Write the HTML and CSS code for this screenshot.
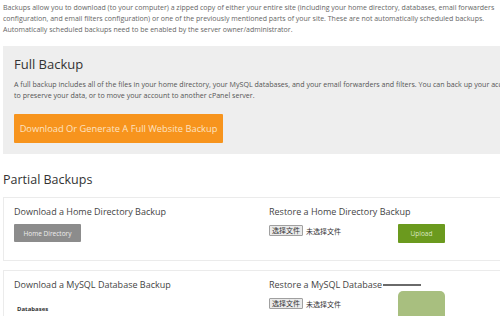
FILE: index.html
```html
<!DOCTYPE html>
<html lang="en">
<head>
    <meta charset="UTF-8">
    <title>Backups</title>
    <link rel="stylesheet" href="styles.css">
</head>
<body>
    <div class="page">
        <p class="intro">Backups allow you to download (to your computer) a zipped copy of either your entire site (including your home directory, databases, email forwarders<br>configuration, and email filters configuration) or one of the previously mentioned parts of your site. These are not automatically scheduled backups.<br>Automatically scheduled backups need to be enabled by the server owner/administrator.</p>

        <!-- Full backup -->
        <div class="full-backup">
            <h2>Full Backup</h2>
            <p>A full backup includes all of the files in your home directory, your MySQL databases, and your email forwarders and filters. You can back up your account<br>to preserve your data, or to move your account to another cPanel server.</p>
            <button class="btn btn-orange">Download Or Generate A Full Website Backup</button>
        </div>

        <h2 class="section-title">Partial Backups</h2>

        <div class="card">
            <div class="col">
                <h3>Download a Home Directory Backup</h3>
                <button class="btn btn-grey">Home Directory</button>
            </div>
            <div class="col">
                <h3>Restore a Home Directory Backup</h3>
                <div class="upload-row">
                    <div class="file-input">
                        <span class="file-btn">选择文件</span>
                        <span class="file-name">未选择文件</span>
                    </div>
                    <button class="btn btn-green">Upload</button>
                </div>
            </div>
        </div>

        <div class="card card-db">
            <div class="col">
                <h3>Download a MySQL Database Backup</h3>
                <div class="label">Databases</div>
            </div>
            <div class="col">
                <h3 class="faded-title">Restore a MySQL Database<span class="smudge"></span></h3>
                <div class="upload-row">
                    <div class="file-input">
                        <span class="file-btn">选择文件</span>
                        <span class="file-name">未选择文件</span>
                    </div>
                    <button class="btn btn-green faded"></button>
                </div>
            </div>
        </div>
    </div>
</body>
</html>
```

FILE: styles.css
```css
/* Base */
body {
    margin: 0;
    background: #ffffff;
    color: #555555;
    font-family: 'Open Sans', 'Noto Sans', sans-serif;
    overflow: hidden;
}

.page {
    width: 540px;
    padding: 2px 0 0 3px;
}

.intro {
    margin: 0;
    font-size: 7px;
    line-height: 11px;
    color: #666666;
    white-space: nowrap;
}

/* Full backup panel */
.full-backup {
    margin-top: 11px;
    background: #eeeeee;
    padding: 8px 11px 11px;
}

.full-backup h2 {
    margin: 0;
    font-size: 13px;
    font-weight: 400;
    color: #333333;
    line-height: 20px;
}

.full-backup p {
    margin: 5px 0 13px;
    font-size: 7.1px;
    line-height: 11px;
    color: #555555;
    white-space: nowrap;
}

/* Buttons */
.btn {
    border: none;
    border-radius: 1px;
    font-family: inherit;
    color: #ffffff;
    cursor: pointer;
    white-space: nowrap;
}

.btn-orange {
    background: #f7941d;
    color: #fde3c2;
    font-size: 9.3px;
    height: 29px;
    padding: 0;
    width: 209px;
}

.btn-grey {
    background: #8c8c8c;
    color: #eeeeee;
    font-size: 6.5px;
    height: 18px;
    width: 67px;
    padding: 0;
}

.btn-green {
    background: #6b9a1e;
    color: #dbe8c4;
    font-size: 6.5px;
    height: 19px;
    width: 47px;
    padding: 0;
}

.btn-green.faded {
    background: #a8bf7f;
    height: 27px;
    margin-top: -6px;
    border-radius: 5px 5px 0 0;
}

/* Section */
.section-title {
    margin: 16px 0 7px;
    font-size: 12.5px;
    font-weight: 400;
    color: #333333;
    line-height: 20px;
}

.card {
    display: grid;
    grid-template-columns: 255px 255px;
    border: 1px solid #ebebeb;
    padding: 7px 10px 0;
    margin-bottom: 9px;
    height: 55px;
}

.card-db {
    height: 60px;
    margin-bottom: 0;
}

.col {
    display: flex;
    flex-direction: column;
    align-items: flex-start;
}

.col h3 {
    margin: 0 0 5px;
    font-size: 9px;
    font-weight: 400;
    color: #444444;
    line-height: 14px;
}

.label {
    margin: 8px 0 0 3px;
    font-size: 6px;
    line-height: 8px;
    font-weight: 700;
    color: #333333;
}

.upload-row {
    display: flex;
    align-items: flex-start;
}

.file-input {
    display: flex;
    align-items: center;
    gap: 3px;
    width: 129px;
    margin-top: 1px;
    font-family: 'Noto Sans CJK SC', sans-serif;
    font-size: 7px;
    color: #333333;
}

.file-btn {
    border: 1px solid #a0a0a0;
    background: #eaeaea;
    padding: 0 2px;
    line-height: 9px;
    border-radius: 1px;
}

/* Cursor smudge on the second card */
.faded-title {
    position: relative;
}

.smudge {
    position: absolute;
    left: 114px;
    top: 6px;
    width: 38px;
    height: 2px;
    background: #6a6a6a;
}
```
